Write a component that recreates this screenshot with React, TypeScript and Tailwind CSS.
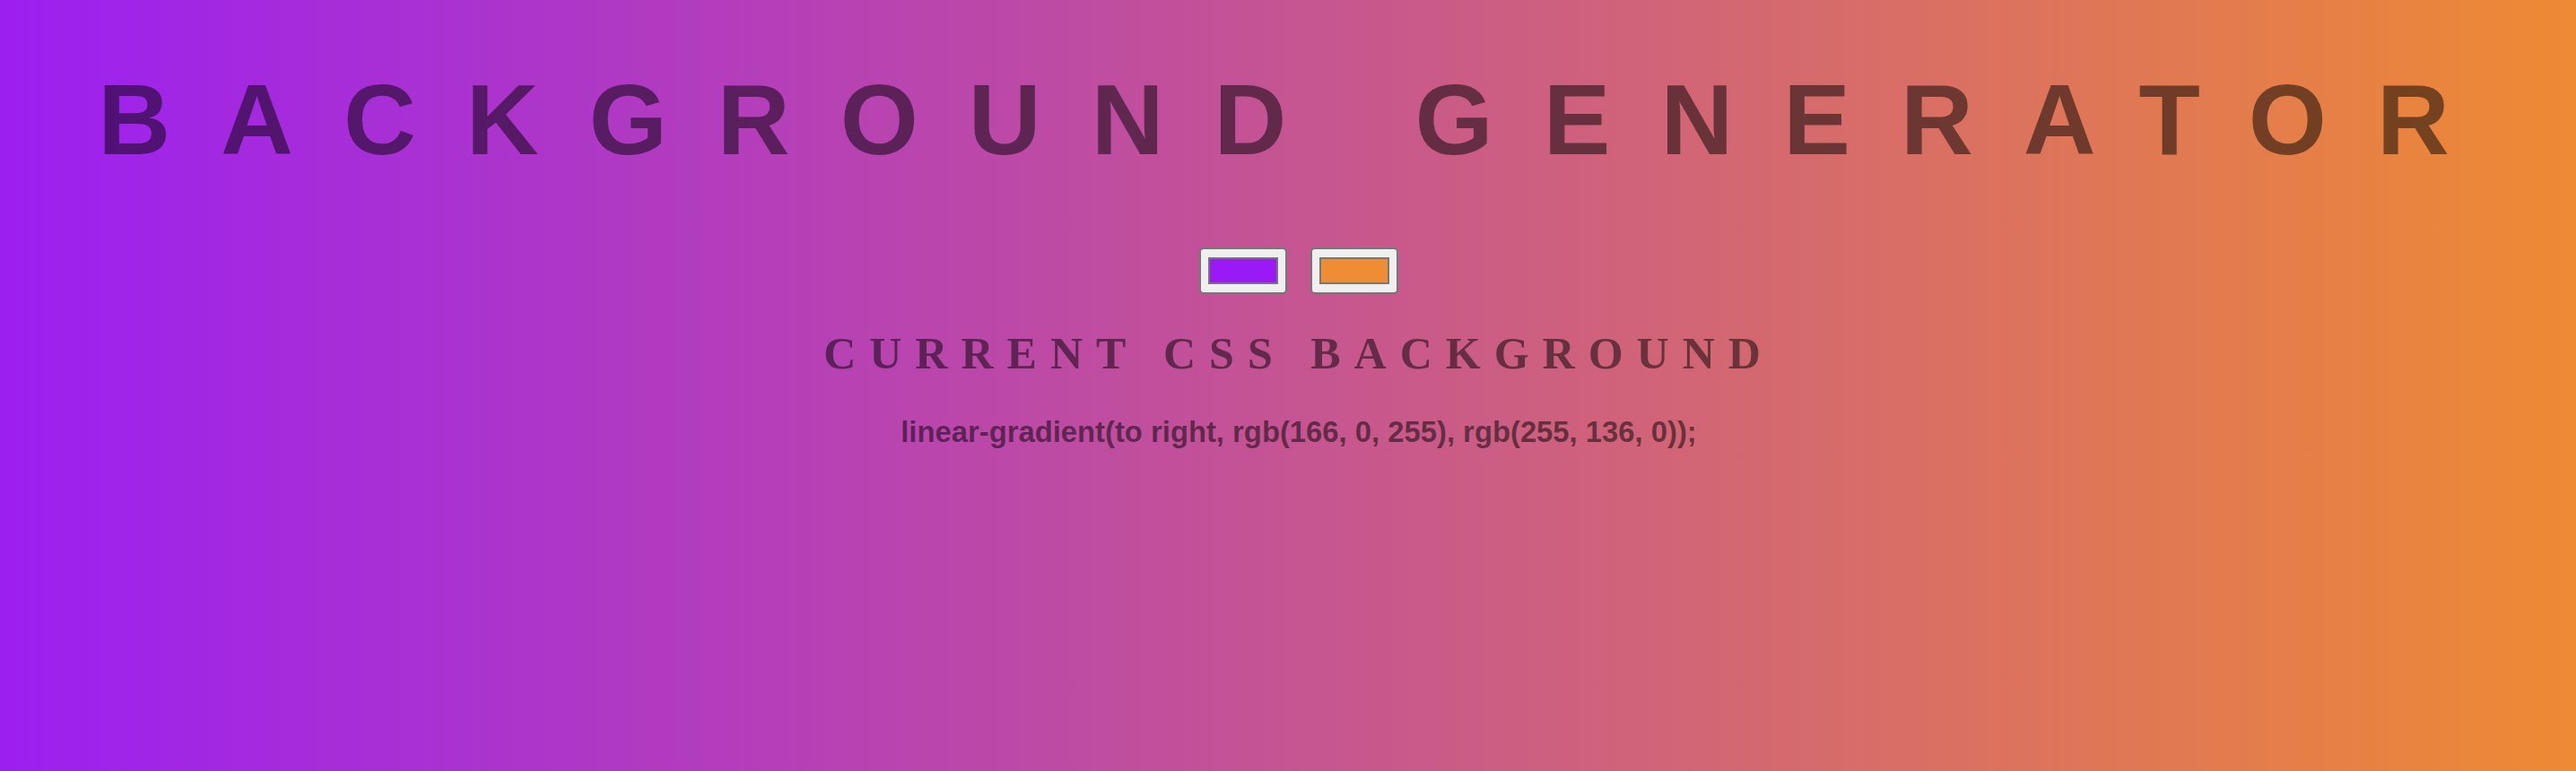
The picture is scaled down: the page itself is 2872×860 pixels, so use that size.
const colors = ["#9b19f5", "#ef8d35"]

function ColorInput({ color }: { color: string }) {
  return (
    <div className="w-[98px] h-[52px] rounded-[5px] border-2 border-[#777777] bg-[#efefef] px-[8px] py-[9px]">
      <div className="h-full w-full border-2 border-[#777777]" style={{ backgroundColor: color }} />
    </div>
  )
}

export default function App() {
  return (
    <div className="min-h-[860px] w-full bg-[linear-gradient(to_right,#9c1ff1,#ee8a34)] pl-[24px] text-center">
      <h1 className="pt-[78px] font-['Liberation_Sans',Arial,sans-serif] text-[112px] font-bold leading-none tracking-[56px] text-black/50">
        BACKGROUND GENERATOR
      </h1>
      <div className="mt-[86px] flex justify-center gap-[26px]">
        {colors.map((c) => (
          <ColorInput key={c} color={c} />
        ))}
      </div>
      <h3 className="mt-[41px] font-['Liberation_Serif','Times_New_Roman',serif] text-[50px] font-bold leading-none tracking-[15px] text-black/50">
        CURRENT CSS BACKGROUND
      </h3>
      <p className="mt-[47px] font-['Liberation_Sans',Arial,sans-serif] text-[32.8px] font-bold leading-none text-black/50">
        linear-gradient(to right, rgb(166, 0, 255), rgb(255, 136, 0));
      </p>
    </div>
  )
}
